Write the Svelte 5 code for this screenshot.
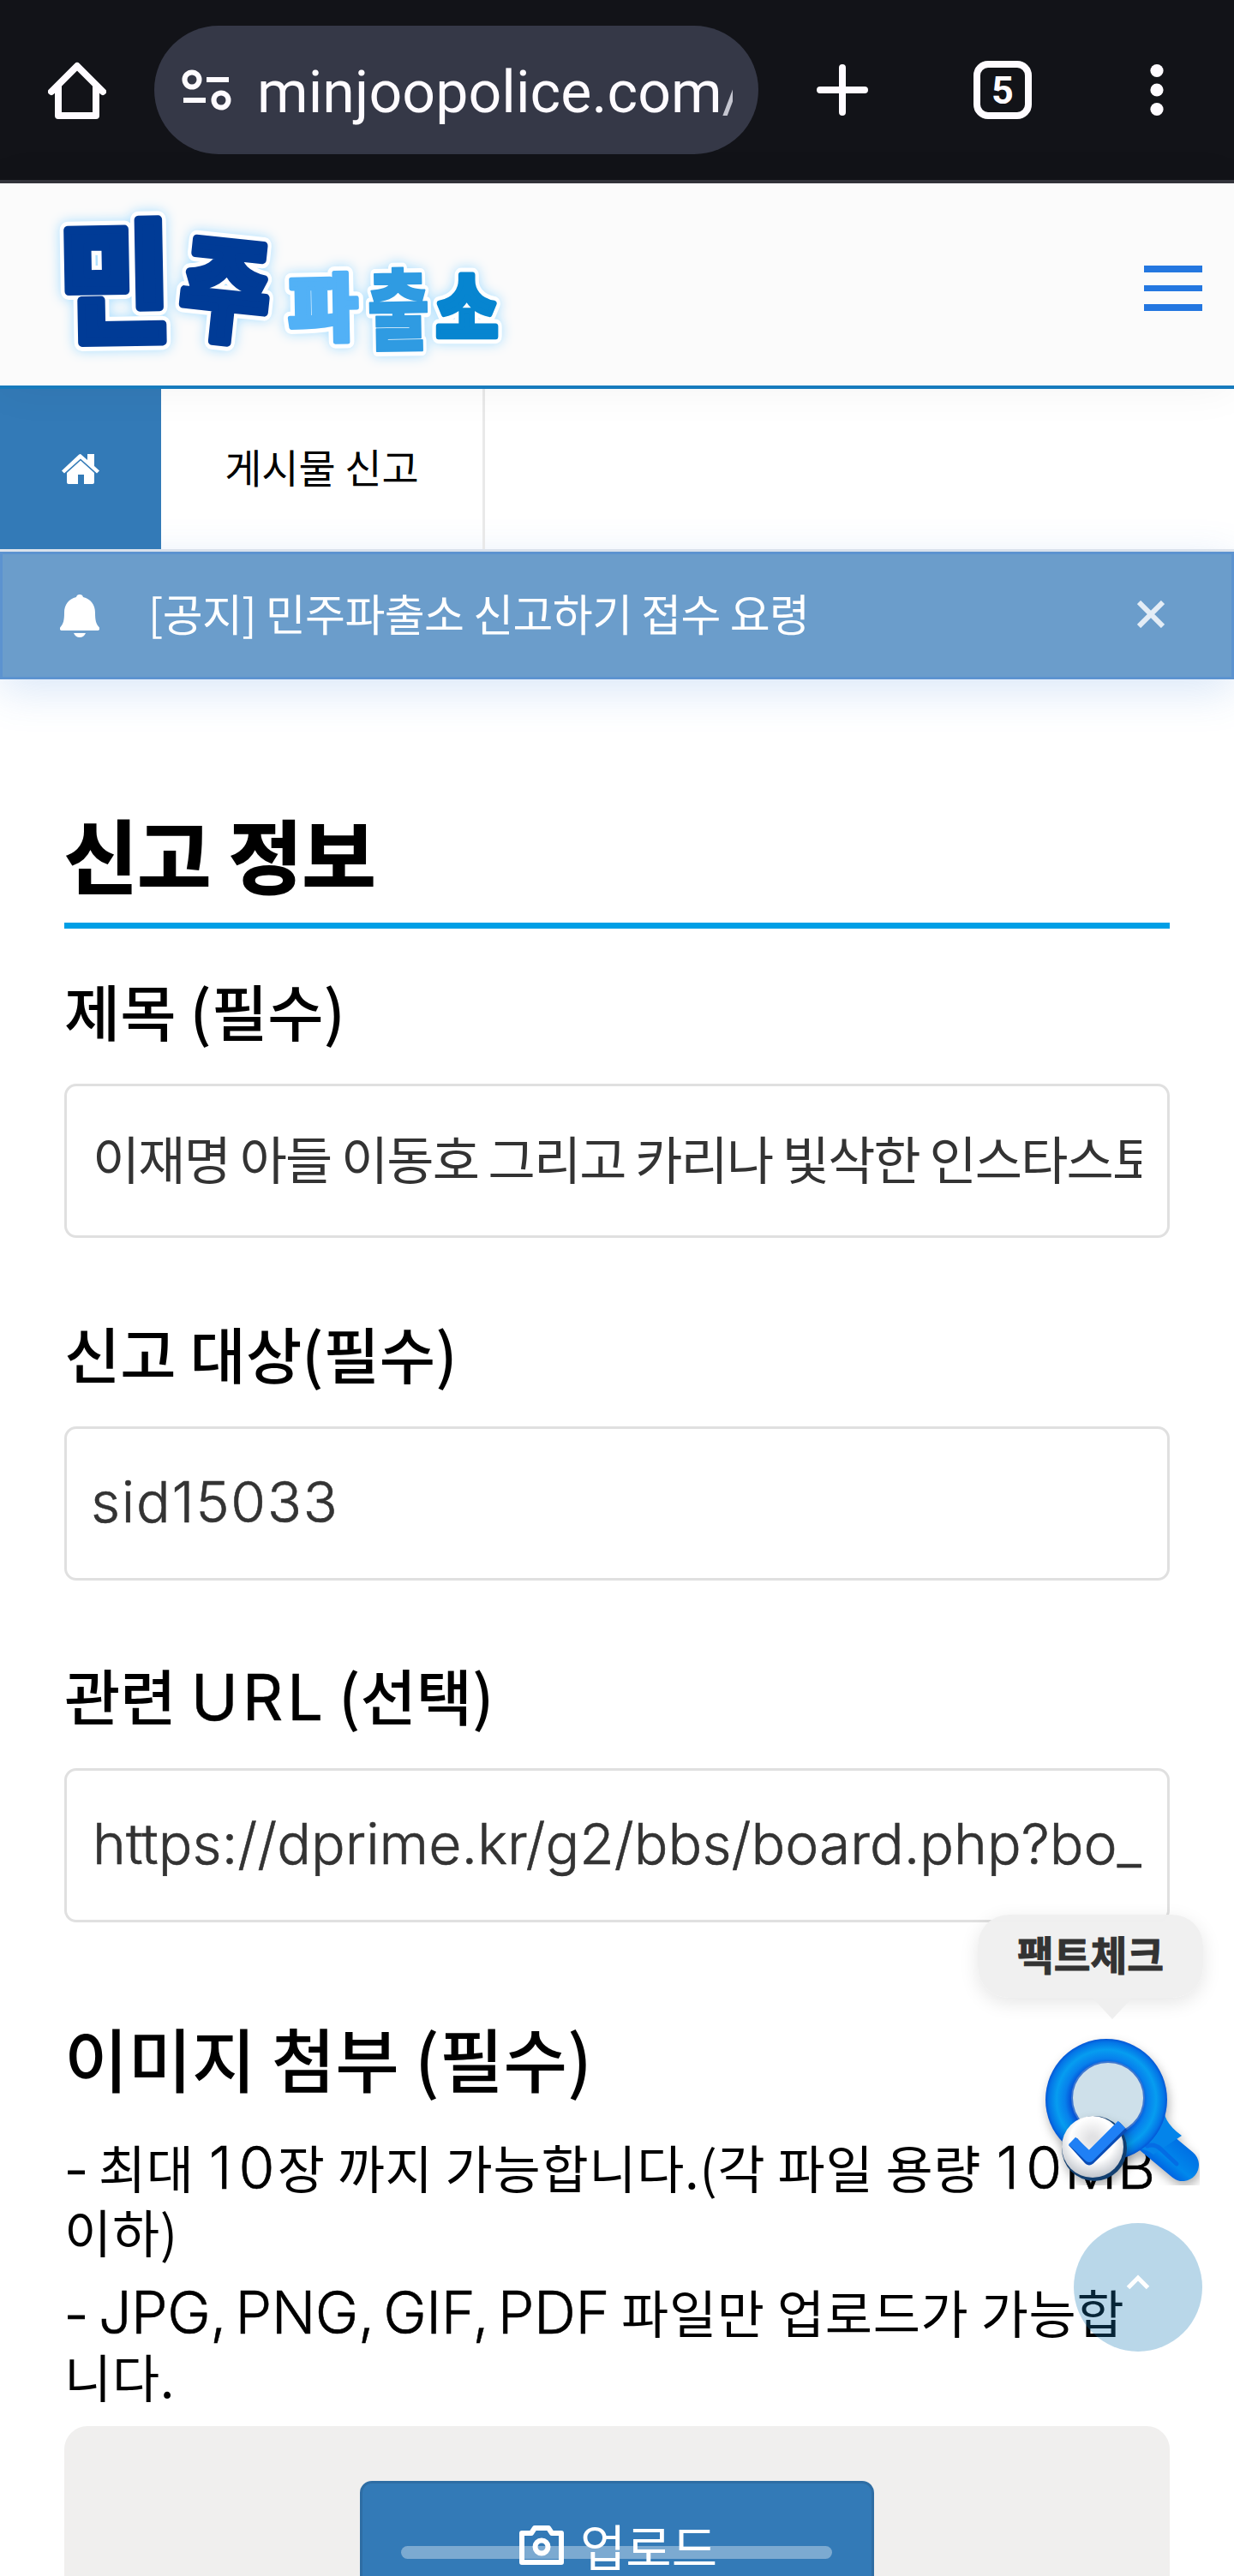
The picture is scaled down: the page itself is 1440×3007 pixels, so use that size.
<script lang="ts">
  let title: string = '이재명 아들 이동호 그리고 카리나 빛삭한 인스타스토리';
  let target: string = 'sid15033';
  let url: string = 'https://dprime.kr/g2/bbs/board.php?bo_';
  let showNotice: boolean = true;

  // wordmark syllables: centre, size, horizontal squeeze, tilt
  const logo = [
    { char: '민', x: 134, y: 115, size: 154, sx: 0.93, tilt: -1, fill: '#003b96', fat: 10 },
    { char: '주', x: 263, y: 124, size: 130, sx: 0.87, tilt: 6, fill: '#003b96', fat: 10 },
    { char: '파', x: 377, y: 145, size: 86, sx: 1.03, tilt: -1, fill: '#52b1f6', fat: 5 },
    { char: '출', x: 465, y: 147, size: 104, sx: 0.76, tilt: -1, fill: '#2f9be2', fat: 2 },
    { char: '소', x: 545, y: 145, size: 90, sx: 0.87, tilt: 0, fill: '#0785d0', fat: 7 }
  ];
</script>

<div class="screen">
  <div class="toolbar">
    <svg class="home" viewBox="0 0 68 68" width="68" height="68">
      <path d="M4 36 34 6 64 36M12 30v34h44V30" />
    </svg>
    <div class="address">
      <svg class="tune" viewBox="0 0 58 48" width="58" height="48">
        <circle cx="12" cy="12" r="8.5" /><path d="M29 12h26M2 36h26" /><circle cx="46" cy="36" r="8.5" />
      </svg>
      <span class="address-text">minjoopolice.com<i>/</i></span>
    </div>
    <svg class="plus" viewBox="0 0 60 60" width="60" height="60">
      <path d="M30 4v52M4 30h52" />
    </svg>
    <div class="tabs">5</div>
    <svg class="more" viewBox="0 0 16 62" width="16" height="62">
      <circle cx="8" cy="8.5" r="7.6" /><circle cx="8" cy="31" r="7.6" /><circle cx="8" cy="53.5" r="7.6" />
    </svg>
  </div>

  <header>
    <svg class="logo" viewBox="0 0 640 236" width="640" height="236">
      {#each ['glow', 'edge', 'face'] as layer}
        <g class={layer}>
          {#each logo as l}
            <text
              transform="translate({l.x} {l.y}) rotate({l.tilt}) scale({l.sx} 1)"
              y={l.size * 0.375}
              font-size={l.size}
              fill={layer === 'face' ? l.fill : undefined}
              stroke={layer === 'face' ? l.fill : undefined}
              stroke-width={layer === 'face' ? l.fat : l.fat + 10}
            >{l.char}</text>
          {/each}
        </g>
      {/each}
    </svg>
    <button class="menu" aria-label="메뉴"><span></span><span></span><span></span></button>
  </header>

  <nav>
    <a class="nav-home" href="#top" aria-label="홈">
      <svg viewBox="0 0 44 35" width="44" height="35">
        <path d="M22 7.5 38 22v11a2 2 0 0 1-2 2H26V24h-7v11H8a2 2 0 0 1-2-2V22z" />
        <path d="M22 0 30 7V0h8v14l6 5.500-3 3L22 5.500 3 22.500l-3-3L20 .8a3 3 0 0 1 2-.8z" />
      </svg>
    </a>
    <a class="nav-item" href="#report">게시물 신고</a>
  </nav>

  {#if showNotice}
    <div class="notice">
      <svg class="bell" viewBox="0 0 46 50" width="46" height="50">
        <path d="M23 0a4 4 0 0 1 4 3c9 2 14 9 14 18 0 9 1 13 4.500 17 1.500 2 .5 4-2 4h-41c-2.500 0-3.500-2-2-4C4 34 5 30 5 21 5 12 10 5 19 3a4 4 0 0 1 4-3zM16 45h14c-1 3-4 5-7 5s-6-2-7-5z" />
      </svg>
      <span class="notice-text">[공지] 민주파출소 신고하기 접수 요령</span>
      <button class="close" aria-label="닫기" on:click={() => (showNotice = false)}>
        <svg viewBox="0 0 32 32" width="32" height="32"><path d="M2 2 30 30M30 2 2 30" /></svg>
      </button>
    </div>
  {/if}

  <main>
    <h2>신고 정보</h2>

    <div class="field">
      <label for="title">제목 (필수)</label>
      <input id="title" class="ko" bind:value={title} />
    </div>

    <div class="field">
      <label for="target">신고 대상(필수)</label>
      <input id="target" class="target" bind:value={target} />
    </div>

    <div class="field">
      <label for="url">관련 <span>URL</span> (선택)</label>
      <input id="url" class="url" bind:value={url} />
    </div>

    <h3>이미지 첨부 (필수)</h3>
    <p><span class="dash">-</span> 최대 <span class="num">10</span>장 까지 가능합니다.(각 파일 용량 <span class="num">10</span><span>MB</span><br />이하)</p>
    <p><span class="dash">-</span> <span class="types">JPG, PNG, GIF, PDF</span> 파일만 업로드가 가능합<br />니다.</p>

    <div class="upload">
      <button class="upload-button">
        <svg viewBox="0 0 52 46" width="52" height="46">
          <path d="M3 9h11l4-6h16l4 6h11v34H3z" /><circle cx="26" cy="25" r="7.500" />
        </svg>
        업로드
      </button>
    </div>
  </main>

  <div class="tooltip">팩트체크</div>

  <svg class="factcheck" viewBox="0 0 190 180" width="190" height="180">
    <defs>
      <linearGradient id="handle" gradientUnits="userSpaceOnUse" x1="132" y1="158" x2="160" y2="124">
        <stop offset="0" stop-color="#0052dc" /><stop offset=".45" stop-color="#0088ec" /><stop offset="1" stop-color="#0070e4" />
      </linearGradient>
      <radialGradient id="ring" gradientUnits="userSpaceOnUse" cx="81" cy="80" r="71">
        <stop offset=".58" stop-color="#0453d8" /><stop offset=".68" stop-color="#0780ec" />
        <stop offset=".82" stop-color="#069df0" /><stop offset=".95" stop-color="#0474e6" /><stop offset="1" stop-color="#0456d6" />
      </radialGradient>
      <radialGradient id="coin" cx=".5" cy=".38" r=".65">
        <stop offset=".1" stop-color="#e2e2e4" /><stop offset=".55" stop-color="#fff" /><stop offset="1" stop-color="#b9bec6" />
      </radialGradient>
    </defs>
    <g class="lens">
      <path d="M122 116 170 156" stroke="url(#handle)" stroke-width="38" stroke-linecap="round" />
      <path d="M149 84q-5 20 20 38L136 144q-14-12-34-2z" fill="#0484ea" />
      <circle cx="81" cy="80" r="71" fill="url(#ring)" />
      <circle cx="83" cy="78" r="42" fill="#cee0ea" stroke="#3f78cf" stroke-width="2" />
      <path d="M129 134q8-3 16 4l18 17" stroke="#0759df" stroke-width="5" stroke-linecap="round" opacity=".55" />
    </g>
    <g class="badge">
      <circle cx="67" cy="137" r="38" fill="#123f70" />
      <circle cx="65" cy="135" r="36" fill="url(#coin)" />
      <path d="M42 129 61 150 101 111" stroke="#0a4cb5" stroke-width="13" stroke-linejoin="round" />
      <path d="M41 128 61 147 99 109" stroke="#1f80f5" stroke-width="12" stroke-linejoin="round" />
    </g>
  </svg>

  <button class="to-top" aria-label="위로">
    <svg viewBox="0 0 28 18" width="28" height="18"><path d="M2.500 15.500 14 4l11.500 11.500" /></svg>
  </button>

  <div class="gesture"></div>
</div>

<style>
  :global(body) {
    background: #fff;
  }

  .screen {
    position: relative;
    width: 1440px;
    height: 3007px;
    overflow: hidden;
    background: #fff;
    color: #000;
    font-family: "Noto Sans CJK KR", "Noto Sans", sans-serif;
  }

  .screen :is(button, a) {
    border: 0;
    padding: 0;
    color: inherit;
    font: inherit;
    text-decoration: none;
  }

  svg {
    display: block;
    fill: none;
    flex: none;
  }

  .toolbar {
    display: flex;
    align-items: center;
    box-sizing: border-box;
    height: 214px;
    padding-left: 56px;
    background: #121318;
    border-bottom: 4px solid #34353c;
  }

  .home, .plus, .tune {
    stroke: #fefbff;
    stroke-width: 8;
    stroke-linecap: round;
    stroke-linejoin: round;
  }

  .tune {
    stroke-width: 6;
    stroke-linecap: butt;
  }

  .address {
    display: flex;
    align-items: center;
    box-sizing: border-box;
    width: 705px;
    height: 150px;
    margin-left: 56px;
    padding: 0 30px 0 32px;
    border-radius: 75px;
    background: #353847;
  }

  .address-text {
    width: 555px;
    margin: 5px 0 0 30px;
    overflow: hidden;
    white-space: nowrap;
    color: #fefbff;
    font: 68px/90px Roboto, sans-serif;
    letter-spacing: 0.1px;
  }

  .address-text i {
    font-style: normal;
    color: #c5c6d0;
  }

  .plus {
    margin-left: 68px;
  }

  .tabs {
    box-sizing: border-box;
    width: 68px;
    height: 68px;
    margin-left: 123px;
    border: 8px solid #fefbff;
    border-radius: 17px;
    color: #fefbff;
    text-align: center;
    font: 700 45px/53px Roboto, sans-serif;
  }

  .more {
    margin-left: 138px;
    fill: #fefbff;
  }

  header {
    position: relative;
    z-index: 1;
    display: flex;
    justify-content: space-between;
    align-items: center;
    box-sizing: border-box;
    height: 240px;
    padding-right: 37px;
    background: #fbfbfb;
    border-bottom: 4px solid #177bbd;
    box-shadow: 0 0 50px rgba(0, 0, 0, 0.05);
  }

  .logo text {
    font-family: "Noto Sans CJK KR", sans-serif;
    font-weight: 900;
    text-anchor: middle;
    stroke-linejoin: round;
  }

  .glow {
    fill: #bfe6ff;
    stroke: #bfe6ff;
    filter: drop-shadow(0 0 7px #a9deff);
  }

  .edge {
    fill: #fff;
    stroke: #fff;
  }

  .menu {
    display: grid;
    gap: 15px;
    width: 68px;
    margin-top: 9px;
    background: none;
  }

  .menu span {
    height: 7.600px;
    background: #2477e0;
  }

  nav {
    display: flex;
    height: 187px;
    border-bottom: 3px solid #e4e8ed;
  }

  .nav-home {
    display: grid;
    place-items: center;
    width: 188px;
    background: #337ab7;
  }

  .nav-home svg {
    fill: #fff;
  }

  .nav-item {
    box-sizing: border-box;
    width: 378px;
    border-right: 3px solid #e9e9e9 !important;
    text-align: center;
    font-size: 47px !important;
    line-height: 180px !important;
  }

  .notice {
    display: flex;
    align-items: center;
    box-sizing: border-box;
    height: 149px;
    padding: 0 78px 0 67px;
    border: 3px solid #5c93d0;
    background: #6b9dcb;
    color: #fff;
    box-shadow: 0 12px 48px rgba(60, 130, 220, 0.2);
  }

  .bell {
    fill: #fff;
  }

  .notice-text {
    margin: -8px auto 0 57px;
    font-size: 51px;
    letter-spacing: -0.6px;
    line-height: 70px;
  }

  .close {
    margin-top: -4px;
    background: none;
  }

  .close svg {
    stroke: #e4edf6;
    stroke-width: 6;
  }

  main {
    padding: 148px 75px 0;
  }

  h2 {
    margin: 0 0 51px;
    padding-bottom: 26px;
    border-bottom: 7px solid #009fe6;
    font-size: 93px;
    font-weight: 700;
    line-height: 110px;
    -webkit-text-stroke: 2px #000;
  }

  .field {
    margin-bottom: 89.500px;
  }

  label {
    display: block;
    margin-bottom: 44px;
    font-size: 71px;
    font-weight: 500;
    line-height: 86px;
  }

  label span {
    margin: 0 -3px 0 1px;
    font-family: Inter, sans-serif;
    font-size: 74px;
    font-weight: 400;
    letter-spacing: 5px;
    line-height: 0;
    -webkit-text-stroke: 0.500px #000;
  }

  input {
    display: block;
    box-sizing: border-box;
    width: 1290px;
    height: 180px;
    padding: 0 30px 4px;
    border: 3px solid #e0e0e0;
    border-radius: 14px;
    background: #fff;
    color: #333;
    outline: 0;
    font: 300 66px Inter, "Noto Sans CJK KR", sans-serif;
    -webkit-text-stroke: 0.600px #333;
  }

  .ko {
    padding-bottom: 9px;
    font: 60px "Noto Sans CJK KR", sans-serif;
    letter-spacing: -1.850px;
    -webkit-text-stroke: 0;
  }

  .target {
    padding-left: 28px;
    letter-spacing: 1.800px;
  }

  .url {
    letter-spacing: 0.020px;
  }

  h3 {
    margin: 107px 0 43px;
    font-size: 81px;
    font-weight: 500;
    line-height: 100px;
  }

  p {
    position: relative;
    top: -3px;
    margin: 0 0 19px;
    font-size: 60px;
    letter-spacing: 0.700px;
    line-height: 75px;
    white-space: nowrap;
  }

  p span {
    font-family: Inter, sans-serif;
    font-size: 68px;
    font-weight: 300;
    line-height: 0;
    -webkit-text-stroke: 0.600px #000;
  }

  p .dash {
    margin-right: -3px;
    font-size: 62px;
    -webkit-text-stroke: 1px #000;
  }

  p .num {
    margin: 0 -5px 0 3px;
    letter-spacing: 8px;
  }

  p .types {
    letter-spacing: -0.500px;
    word-spacing: -8px;
  }

  .upload {
    display: flex;
    justify-content: center;
    height: 300px;
    padding-top: 64px;
    border-radius: 27px;
    background: #f0efee;
  }

  .upload .upload-button {
    display: flex;
    justify-content: center;
    align-items: center;
    gap: 19px;
    width: 600px;
    height: 150px;
    padding-left: 3px;
    border: 3px solid #2e6da4;
    border-radius: 14px;
    background: #337ab7;
    color: #fff;
    font-size: 58px;
  }

  .upload-button svg {
    stroke: #fff;
    stroke-width: 6;
    stroke-linejoin: round;
  }

  .tooltip {
    position: absolute;
    top: 2235px;
    left: 1141px;
    width: 263px;
    height: 97px;
    border-radius: 36px;
    background: rgba(239, 239, 239, 0.95);
    box-shadow: 0 6px 22px rgba(0, 0, 0, 0.1);
    color: #333;
    text-align: center;
    font-size: 46.500px;
    font-weight: 700;
    line-height: 90px;
    -webkit-text-stroke: 1px #333;
  }

  .tooltip::after {
    content: '';
    position: absolute;
    top: 97px;
    left: 134px;
    border: 23px solid transparent;
    border-top: 25px solid #efefef;
    border-bottom: 0;
  }

  .factcheck {
    position: absolute;
    top: 2371px;
    left: 1210px;
  }

  .lens, .badge {
    filter: drop-shadow(2px 6px 6px rgba(0, 0, 0, 0.3));
  }

  .screen .to-top {
    position: absolute;
    top: 2595px;
    left: 1253px;
    width: 150px;
    height: 150px;
    border-radius: 50%;
    background: rgba(22, 122, 182, 0.3);
  }

  .to-top svg {
    margin: -12px auto 0;
    stroke: #fff;
    stroke-width: 5;
  }

  .gesture {
    position: absolute;
    top: 2972px;
    left: 468px;
    width: 503px;
    height: 15px;
    border-radius: 8px;
    background: rgba(255, 255, 255, 0.36);
  }
</style>
